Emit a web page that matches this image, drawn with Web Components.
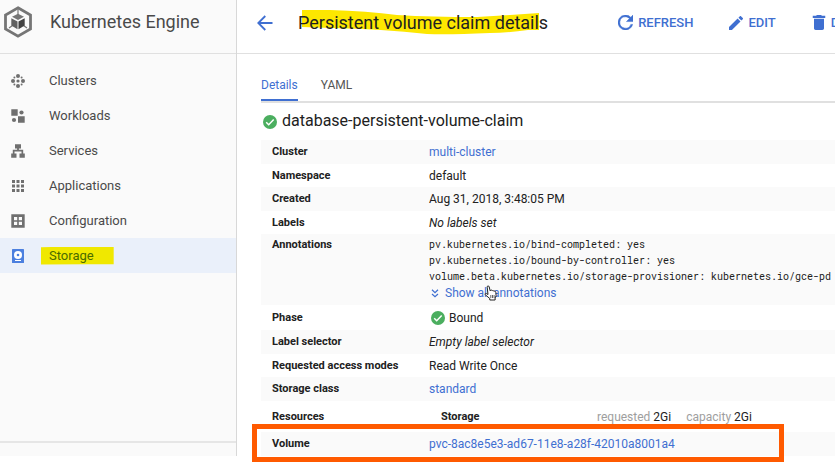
<!DOCTYPE html>
<html lang="en">
<head>
<meta charset="utf-8">
<title>Persistent volume claim details</title>
<style>
html, body { margin: 0; }
body { background: #fff; color: #212121; font: 12px/16px Roboto, "Liberation Sans", sans-serif; min-height: 100vh; overflow: hidden; --blue: #3f6fd1; --grey: #6f6f6f; --line: #e0e0e0; --stripe: #fafafa; }
</style>
</head>
<body>
<console-page>
  <console-sidebar slot="side">
    <nav-item icon="clusters">Clusters</nav-item>
    <nav-item icon="workloads">Workloads</nav-item>
    <nav-item icon="services">Services</nav-item>
    <nav-item icon="applications">Applications</nav-item>
    <nav-item icon="configuration">Configuration</nav-item>
    <nav-item icon="storage" selected>Storage</nav-item>
  </console-sidebar>
  <page-header slot="header">
    Persistent volume claim details
    <action-button slot="actions" icon="refresh">REFRESH</action-button>
    <action-button slot="actions" icon="edit">EDIT</action-button>
    <action-button slot="actions" icon="delete">DELETE</action-button>
  </page-header>
  <tab-bar>
    <tab-button selected>Details</tab-button>
    <tab-button>YAML</tab-button>
  </tab-bar>
  <resource-title>database-persistent-volume-claim</resource-title>
  <claim-details></claim-details>
</console-page>
<script>
const ICONS = {
  clusters: '<svg viewBox="0 0 14 14" width="14" height="14"><g fill="currentColor"><circle cx="7" cy="7" r="1.6"/><circle cx="7" cy="2" r="2"/><circle cx="7" cy="12" r="2"/><circle cx="2" cy="7" r="2"/><circle cx="12" cy="7" r="2"/><circle cx="3.4" cy="3.4" r="1"/><circle cx="10.6" cy="3.4" r="1"/><circle cx="3.4" cy="10.6" r="1"/><circle cx="10.6" cy="10.6" r="1"/></g></svg>',
  workloads: '<svg viewBox="0 0 14 14" width="14" height="14"><g fill="currentColor"><path d="M.3.3h6.400v6.400H.3zM7 7.300h6.700v6.400H7z"/><circle cx="10.500" cy="3.500" r="2.100"/><circle cx="3" cy="11" r="2.100"/></g></svg>',
  services: '<svg viewBox="0 0 14 14" width="14" height="14"><path fill="currentColor" d="M4 .3h6v4.200H7.900v1.300H12.200V9.500h1.600v4.300H8.500V9.500h2V7.500h-7v2h2v4.300H.2V9.500h1.600V5.800h4.300V4.500H4z"/></svg>',
  applications: '<svg viewBox="0 0 14 14" width="14" height="14"><path fill="currentColor" d="M1 1h3v3H1zM5.500 1h3v3h-3zM10 1h3v3h-3zM1 5.500h3v3H1zM5.500 5.500h3v3h-3zM10 5.500h3v3h-3zM1 10h3v3H1zM5.500 10h3v3h-3zM10 10h3v3h-3z"/></svg>',
  configuration: '<svg viewBox="0 0 14 14" width="14" height="14"><path fill="currentColor" fill-rule="evenodd" d="M.3.3h13.400v13.400H.3zM3 3v3.200h3.200V3zM7.800 3v3.200H11V3zM3 7.800V11h3.200V7.800zM7.800 7.800V11H11V7.800z"/></svg>',
  storage: '<svg viewBox="0 0 14 14" width="14" height="14"><rect x="1" y="0" width="12" height="14" rx=".6" fill="#4c80df"/><circle cx="7" cy="6" r="4" fill="#fff"/><circle cx="7" cy="6" r="1.300" fill="#4c80df"/><path d="M4 11.500h6" stroke="#fff"/></svg>',
  refresh: '<svg viewBox="4 4 16 16" width="15" height="15"><path fill="currentColor" stroke="currentColor" stroke-width=".5" d="M17.650 6.350A8 8 0 1 0 19.730 14h-2.080A6 6 0 1 1 12 6c1.660 0 3.140.69 4.220 1.780L13 11h7V4z"/></svg>',
  edit: '<svg viewBox="3 3 18 18" width="14" height="14"><path fill="currentColor" d="M3 17.250V21h3.750L17.810 9.940l-3.750-3.750zM20.710 7.040a1 1 0 0 0 0-1.410l-2.340-2.340a1 1 0 0 0-1.410 0l-1.830 1.830 3.750 3.750z"/></svg>',
  delete: '<svg viewBox="4 3 16 18" width="14" height="15"><path fill="currentColor" d="M6 19c0 1.100.9 2 2 2h8c1.100 0 2-.9 2-2V7.500H6zM19.500 4h-4l-1-1h-5l-1 1h-4v2.500h15z"/></svg>',
  back: '<svg viewBox="0 0 16 16" width="16" height="16"><path d="M15.500 8H1.500M8.300 1 1.300 8l7 7" fill="none" stroke="currentColor" stroke-width="1.800"/></svg>',
  engine: '<svg viewBox="0 0 28 32" width="28" height="32"><path d="M14 1.800 26.500 9v14L14 30.200 1.500 23V9z" fill="none" stroke="#757575" stroke-width="2.800"/><path d="M14 3v8M5 22l5-3.500M23 22l-5-3.500" stroke="#757575" stroke-width="1.200"/><path d="m14 7.800 6 3-6 3.200-6-3.200z" fill="#757575"/><path d="M7.300 12.200l6.200 3.400v7.600l-6.200-3.600z" fill="#616161"/><path d="M20.700 12.200l-6.200 3.400v7.600l6.200-3.600z" fill="#424242"/></svg>',
  expand: '<svg viewBox="0 0 8 9" width="8" height="9"><path d="M1 .8 4 3.600 7 .8M1 5 4 7.800 7 5" fill="none" stroke="currentColor" stroke-width="1.200"/></svg>',
  ok: '<svg viewBox="0 0 14 14" width="14" height="14"><circle cx="7" cy="7" r="7" fill="#4bae5f"/><path d="m3.200 7.300 2.500 2.500 5-5.200" fill="none" stroke="#fff" stroke-width="1.500"/></svg>',
  hand: '<svg viewBox="0 0 13 16" width="13" height="16"><path d="M4 9.500 3.200 2.200C3 .6 4.800.4 5.200 1.900l1 4 .4-.6c.7-.5 1.400-.2 1.600.5.600-.600 1.500-.300 1.700.5.900-.5 1.800 0 1.900 1l.3 3.500-1 2.200v2H5.800v-1.500L1.300 9.800c-.8-1 .3-1.900 1.200-1.200z" fill="#fff" stroke="#222" stroke-width="1"/><path d="M6.800 10v3M8.500 10v3M10.100 10v3" stroke="#222" stroke-width=".7"/></svg>'
};

function define(name, render) {
  customElements.define(name, class extends HTMLElement {
    constructor() {
      super();
      const t = document.createElement('template');
      t.innerHTML = render(this);
      this.attachShadow({ mode: 'open' }).append(t.content.cloneNode(true));
    }
  });
}

define('console-page', () => `
<style>
:host { display: grid; grid-template-columns: 236px minmax(0, 1fr); }
main { border-left: 1px solid #d8d8d8; min-width: 0; }
section { padding-left: 24px; }
</style>
<slot name="side"></slot>
<main><slot name="header"></slot><section><slot></slot></section></main>`);

define('console-sidebar', () => `
<style>
:host { display: flex; flex-direction: column; background: var(--stripe); }
header { display: flex; align-items: center; gap: 18px; box-sizing: border-box; height: 54px; padding: 0 4px 9px; border-bottom: 1px solid var(--line); }
h2 { margin: 0; font-size: 18px; line-height: 24px; font-weight: 400; color: #4a4a4a; }
svg { display: block; }
nav { flex: 1; padding-top: 9px; }
footer { height: 13px; border-top: 2px solid #e6e6e6; }
</style>
<header>${ICONS.engine}<h2>Kubernetes Engine</h2></header>
<nav aria-label="Kubernetes Engine"><slot></slot></nav>
<footer></footer>`);

define('nav-item', el => `
<style>
:host { display: block; }
:host([selected]) { background: #eaf0fa; }
a { display: flex; align-items: center; gap: 24px; height: 35px; padding: 0 11px; color: #4a4a4a; font-size: 13px; line-height: 18px; text-decoration: none; }
.icon { display: flex; color: var(--grey); }
:host([selected]) .label { color: #4a6b00; background: #f0e800; margin-left: -8px; padding: 0 20px 0 8px; clip-path: polygon(0 4%, 45% 0, 100% 0, 100% 98%, 60% 98%, 0 100%); }
</style>
<a href="#"><span class="icon">${ICONS[el.getAttribute('icon')]}</span><span class="label"><slot></slot></span></a>`);

define('page-header', () => `
<style>
:host { display: flex; align-items: center; box-sizing: border-box; height: 54px; padding: 0 0 8px 20px; border-bottom: 1px solid var(--line); white-space: nowrap; overflow: hidden; }
button { border: 0; padding: 0; background: none; color: var(--blue); display: flex; }
h1 { position: relative; z-index: 0; margin: 0 0 0 25px; font-size: 18px; line-height: 24px; font-weight: 400; color: #212121; }
.marker { position: absolute; z-index: -1; left: 4px; top: -2px; width: 237px; height: 26px; }
.actions { display: flex; gap: 36px; margin-left: 70px; }
</style>
<button aria-label="Back">${ICONS.back}</button>
<h1><svg class="marker" viewBox="0 0 237 26" preserveAspectRatio="none"><path d="M0 1 28 1Q65 2 95 6Q130 8 175 8L208 6 237 4V21H226Q205 24 188 24Q145 26 125 25Q80 20 30 19L0 18Z" fill="#fde700"/></svg><slot></slot></h1>
<div class="actions"><slot name="actions"></slot></div>`);

define('action-button', el => `
<style>
:host { display: block; }
button { display: flex; align-items: center; gap: 5px; border: 0; padding: 0; background: none; color: var(--blue); font: 500 13px/18px Roboto, "Liberation Sans", sans-serif; }
</style>
<button>${ICONS[el.getAttribute('icon')]}<span><slot></slot></span></button>`);

define('tab-bar', () => `
<style>
:host { display: flex; gap: 23px; padding-top: 16px; border-bottom: 2px solid var(--line); }
</style><slot></slot>`);

define('tab-button', () => `
<style>
:host { display: block; }
button { display: block; height: 31px; padding: 0; border: 0; border-bottom: 2px solid transparent; background: none; color: #555; font: 12px/16px Roboto, "Liberation Sans", sans-serif; }
:host([selected]) button { color: var(--blue); border-color: var(--blue); }
</style><button><slot></slot></button>`);

define('status-icon', () => `
<style>:host { display: inline-flex; } svg { display: block; }</style>${ICONS.ok}`);

define('resource-title', () => `
<style>
:host { display: flex; align-items: center; gap: 5px; height: 37px; padding-left: 2px; }
h2 { margin: 0; font-size: 16px; line-height: 20px; font-weight: 400; padding-bottom: 2px; }
</style><status-icon></status-icon><h2><slot></slot></h2>`);

define('show-more', () => `
<style>
:host { display: block; position: relative; }
button { display: flex; align-items: center; gap: 6px; padding: 0 0 0 2px; border: 0; background: none; color: var(--blue); font: 12px/16px Roboto, "Liberation Sans", sans-serif; }
.pointer { position: absolute; left: 55px; top: 0; display: flex; }
</style>
<button>${ICONS.expand}<span><slot></slot></span></button><span class="pointer">${ICONS.hand}</span>`);

define('claim-details', () => `
<style>
:host { display: block; }
table { width: 100%; border-collapse: collapse; }
tr { position: relative; height: 23px; }
tr:nth-child(odd) { background: var(--stripe); height: 24px; }
th, td { padding: 0; text-align: left; }
th { width: 157px; padding-left: 11px; font-size: 11px; font-weight: 700; }
a { color: var(--blue); text-decoration: none; }
.notes th, .notes td { vertical-align: top; padding-top: 3px; padding-bottom: 4px; }
.notes div { font-family: "Roboto Mono", "DejaVu Sans Mono", monospace; font-size: 10px; white-space: nowrap; }
tr.phase { height: 25px; }
.bound { display: flex; align-items: center; gap: 4px; padding-left: 2px; }
tr.resources { height: 31px; }
dl { display: flex; margin: 0; padding-left: 12px; }
dt { width: 156px; font-size: 11px; font-weight: 700; }
dd { margin: 0 15px 0 0; }
dd span { color: #9e9e9e; }
.frame { position: absolute; inset: -8px 51px -6px -9px; border: 5px solid #ff5a00; }
</style>
<table>
<tr><th scope="row">Cluster</th><td><a href="#">multi-cluster</a></td></tr>
<tr><th scope="row">Namespace</th><td>default</td></tr>
<tr><th scope="row">Created</th><td>Aug 31, 2018, 3:48:05 PM</td></tr>
<tr><th scope="row">Labels</th><td><i>No labels set</i></td></tr>
<tr class="notes"><th scope="row">Annotations</th><td>
<div>pv.kubernetes.io/bind-completed: yes</div><div>pv.kubernetes.io/bound-by-controller: yes</div><div>volume.beta.kubernetes.io/storage-provisioner: kubernetes.io/gce-pd</div><show-more>Show all annotations</show-more></td></tr>
<tr class="phase"><th scope="row">Phase</th><td><span class="bound"><status-icon></status-icon>Bound</span></td></tr>
<tr><th scope="row">Label selector</th><td><i>Empty label selector</i></td></tr>
<tr><th scope="row">Requested access modes</th><td>Read Write Once</td></tr>
<tr><th scope="row">Storage class</th><td><a href="#">standard</a></td></tr>
<tr class="resources"><th scope="row">Resources</th><td><dl><dt>Storage</dt><dd><span>requested</span> 2Gi</dd><dd><span>capacity</span> 2Gi</dd></dl></td></tr>
<tr><th scope="row">Volume<span class="frame"></span></th><td><a href="#">pvc-8ac8e5e3-ad67-11e8-a28f-42010a8001a4</a></td></tr>
</table>`);
</script>
</body>
</html>
